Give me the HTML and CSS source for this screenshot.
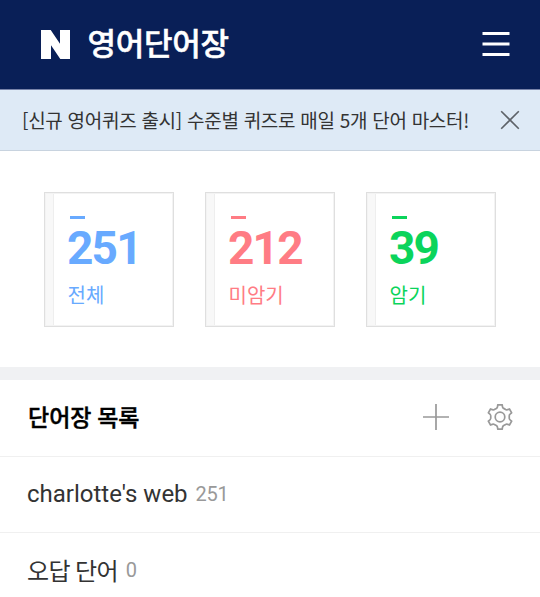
FILE: index.html
```html
<!DOCTYPE html>
<html lang="ko">
<head>
<meta charset="utf-8">
<title>영어단어장</title>
<link rel="stylesheet" href="styles.css">
</head>
<body>
<header class="header">
  <svg class="logo" width="29" height="29" viewBox="0 0 29 29"><path d="M0 0H9.700L19 13.700V0H29V29H19.300L10 15.300V29H0Z"/></svg>
  <h1 class="title">영어단어장</h1>
  <svg class="menu" width="28" height="24" viewBox="0 0 28 24"><path d="M.5 1.500H27.500M.5 12H27.500M.5 22.500H27.500"/></svg>
</header>
<div class="notice">
  <span class="notice-text">[신규 영어퀴즈 출시] 수준별 퀴즈로 매일 5개 단어 마스터!</span>
  <svg class="close" width="20" height="20" viewBox="0 0 20 20"><path d="M1.200 1.200L18.800 18.800M18.800 1.200L1.200 18.800"/></svg>
</div>
<section class="cards">
  <div class="card blue"><i class="dash"></i><b class="num">251</b><span class="label">전체</span></div>
  <div class="card red"><i class="dash"></i><b class="num">212</b><span class="label">미암기</span></div>
  <div class="card green"><i class="dash"></i><b class="num">39</b><span class="label">암기</span></div>
</section>
<section class="list">
  <div class="list-head">
    <h2 class="list-title">단어장 목록</h2>
    <svg class="icon plus" width="26" height="26" viewBox="0 0 26 26"><path d="M13 0V26M0 13H26"/></svg>
    <svg class="icon gear" width="26" height="26" viewBox="-13 -13 26 26"><path d="M-3.600-8.600Q-2.500-9-2.200-12.200H2.200Q2.500-9 3.600-8.600T5.650-7.420Q6.540-6.660 9.470-8.010L11.670-4.190Q9.040-2.330 9.250-1.180V1.180Q9.040 2.330 11.670 4.190L9.470 8.010Q6.540 6.660 5.650 7.420L3.600 8.600Q2.500 9 2.200 12.200H-2.200Q-2.500 9-3.600 8.600L-5.650 7.420Q-6.540 6.660-9.470 8.010L-11.670 4.190Q-9.040 2.330-9.250 1.180V-1.180Q-9.040-2.330-11.670-4.190L-9.470-8.010Q-6.540-6.660-5.650-7.420Z"/><circle r="4.800"/></svg>
  </div>
  <div class="row"><span class="name">charlotte's web</span><span class="count">251</span></div>
  <div class="row"><span class="name korean">오답 단어</span><span class="count">0</span></div>
</section>
</body>
</html>
```
FILE: styles.css
```css
*{box-sizing:border-box}
body{margin:0;width:540px;height:597px;overflow:hidden;background:#fff;font-family:Roboto,"Noto Sans CJK KR",sans-serif;color:#333}
h1,h2{margin:0}
.header{height:90px;background:#091f57;border-bottom:1px solid #7883a9;display:flex;align-items:center;padding:0 30px 0 41px}
.logo{fill:#fff}
.title{margin:1px 0 0 17.5px;color:#fff;font-size:31px;font-weight:500;line-height:40px;letter-spacing:-.3px;-webkit-text-stroke:.5px #fff}
.menu{margin-left:auto;margin-bottom:1px;fill:none;stroke:#fff;stroke-width:3}
.notice{height:61px;background:#deeaf6;border-bottom:1px solid #c8d3df;display:flex;align-items:center;padding:0 20px 0 22px}
.notice-text{font-family:"Noto Sans CJK KR",sans-serif;font-size:19px;line-height:28px;letter-spacing:-.28px;white-space:nowrap}
.close{margin-left:auto;fill:none;stroke:#5d6268;stroke-width:1.6}
.cards{height:216px;padding:41px 44px 0;display:flex;gap:31px}
.card{width:130px;height:135px;border:1.5px solid #dfdfdf;box-shadow:inset 0 0 0 1px #f3f3f3;padding:23px 0 0 22px;display:flex;flex-direction:column;background:linear-gradient(90deg,#f8f8f8 8px,#eee 8px,#eee 9px,#fff 9px)}
.dash{width:15px;height:3px;margin-left:3px;background:currentColor}
.num{font-size:46px;line-height:54px;font-weight:700;margin-top:2px;letter-spacing:-1.8px}
.label{font-size:20px;line-height:28px;margin-top:7px;margin-left:.5px}
.blue{color:#68aaff}
.red{color:#ff7c84}
.green{color:#0bd45b}
.list{border-top:13px solid #f0f1f3}
.list-head{height:77px;border-bottom:1px solid #f0f0f0;display:flex;align-items:center;padding:0 27px 0 28px}
.list-title{font-size:23px;line-height:30px;margin-top:2px;font-weight:500;color:#000;-webkit-text-stroke:.4px #000}
.icon{fill:none;stroke:#999;stroke-width:1.7;stroke-linejoin:round;margin-bottom:2px}
.plus{margin-left:auto}
.gear{margin-left:38px}
.row{height:76px;border-bottom:1px solid #f0f0f0;display:flex;align-items:center;padding:0 0 1px 27px}
.name{font-size:24px}
.korean{letter-spacing:-.7px;margin-bottom:2px}
.count{font-size:20px;font-weight:400;color:#999;margin-left:8px;letter-spacing:-.3px}
```
